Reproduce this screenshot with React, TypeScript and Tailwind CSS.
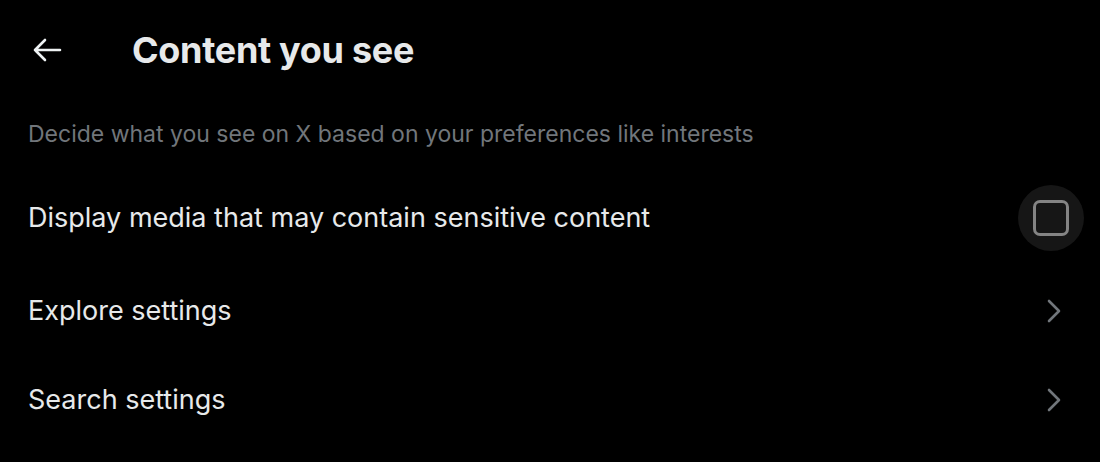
import React from "react";

const font = { fontFamily: "Inter, 'Noto Sans', sans-serif" };

function Chevron() {
  return (
    <svg width="16" height="24" viewBox="0 0 16 24" fill="none">
      <path d="M3 2 L13 12 L3 22" stroke="#71767b" strokeWidth="2.6" strokeLinecap="round" strokeLinejoin="round" />
    </svg>
  );
}

function BackArrow() {
  return (
    <svg width="30" height="24" viewBox="0 0 30 24" fill="none">
      <path d="M28 12 H3 M13 2 L3 12 L13 22" stroke="#eff3f4" strokeWidth="2.6" strokeLinecap="round" strokeLinejoin="round" />
    </svg>
  );
}

export default function App() {
  return (
    <div className="w-[1100px] h-[462px] bg-black text-[#e7e9ea] overflow-hidden" style={font}>
      <div className="h-[98px] flex items-center pl-[32px] pt-[2px]">
        <BackArrow />
        <h1 className="ml-[70px] text-[36px] font-bold tracking-[-0.3px] text-[#e7e9ea]">Content you see</h1>
      </div>
      <div className="h-[72px] flex items-center px-[28px] text-[23px] text-[#71767b]">
        Decide what you see on X based on your preferences like interests
      </div>
      <div className="h-[96px] flex items-center justify-between pl-[28px] pr-[16px]">
        <span className="text-[27px]">Display media that may contain sensitive content</span>
        <div className="w-[66px] h-[66px] rounded-full bg-[#161616] flex items-center justify-center">
          <div className="w-[36px] h-[36px] rounded-[7px] border-[3px] border-[#848484]" />
        </div>
      </div>
      <div className="h-[90px] flex items-center justify-between pl-[28px] pr-[38px]">
        <span className="text-[27px]">Explore settings</span>
        <Chevron />
      </div>
      <div className="h-[88px] flex items-center justify-between pl-[28px] pr-[38px]">
        <span className="text-[27px]">Search settings</span>
        <Chevron />
      </div>
    </div>
  );
}
